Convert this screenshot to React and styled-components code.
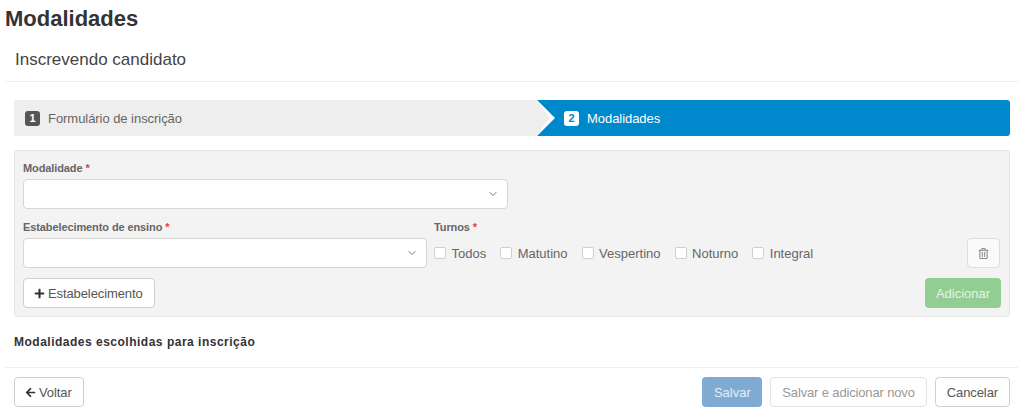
import React from "react";
import styled, { createGlobalStyle } from "styled-components";
import { FaPlus, FaArrowLeft, FaRegTrashAlt } from "react-icons/fa";
import { FiChevronDown } from "react-icons/fi";

const GlobalStyle = createGlobalStyle`
    html, body {
        margin: 0;
        padding: 0;
        background: #ffffff;
    }
    body {
        font-family: "Liberation Sans", Arial, sans-serif;
        color: #333333;
    }
    * {
        box-sizing: border-box;
    }
`;

const turnos = ["Todos", "Matutino", "Vespertino", "Noturno", "Integral"];

export default function App() {
    return (
        <>
            <GlobalStyle />
            <Page>
                <PageTitle>Modalidades</PageTitle>
                <SubHeader>Inscrevendo candidato</SubHeader>
                <Content>
                    <Steps>
                        <StepDone>
                            <StepNumber>1</StepNumber>
                            Formulário de inscrição
                        </StepDone>
                        <StepActive>
                            <StepNumber $active>2</StepNumber>
                            Modalidades
                        </StepActive>
                    </Steps>

                    <Panel>
                        <Label>
                            Modalidade <Req>*</Req>
                        </Label>
                        <Select $width="485px">
                            <FiChevronDown />
                        </Select>

                        <ShiftGrid>
                            <Label>
                                Estabelecimento de ensino <Req>*</Req>
                            </Label>
                            <Label>
                                Turnos <Req>*</Req>
                            </Label>
                            <Select>
                                <FiChevronDown />
                            </Select>
                            <CheckRow>
                                {turnos.map((t) => (
                                    <CheckItem key={t}>
                                        <CheckBox />
                                        {t}
                                    </CheckItem>
                                ))}
                                <TrashButton>
                                    <FaRegTrashAlt />
                                </TrashButton>
                            </CheckRow>
                        </ShiftGrid>

                        <PanelActions>
                            <Button>
                                <FaPlus className="dark" />
                                Estabelecimento
                            </Button>
                            <AddButton>Adicionar</AddButton>
                        </PanelActions>
                    </Panel>

                    <ChosenTitle>Modalidades escolhidas para inscrição</ChosenTitle>
                </Content>

                <Footer>
                    <Button>
                        <FaArrowLeft className="dark" />
                        Voltar
                    </Button>
                    <FooterRight>
                        <SaveButton>Salvar</SaveButton>
                        <Button $disabled>Salvar e adicionar novo</Button>
                        <Button>Cancelar</Button>
                    </FooterRight>
                </Footer>
            </Page>
        </>
    );
}

const Page = styled.div`
    width: 1024px;
    height: 419px;
    overflow: hidden;
    padding: 8px 6px 0 5px;
`;

const PageTitle = styled.h1`
    margin: 0;
    font-size: 22px;
    line-height: 22px;
    font-weight: 700;
    color: #333333;
`;

const SubHeader = styled.div`
    margin-top: 20px;
    padding: 0 8px 11px 10px;
    font-size: 17px;
    line-height: 20px;
    color: #444444;
    border-bottom: 1px solid #eeeeee;
`;

const Content = styled.div`
    padding: 18px 8px 0 9px;
`;

const Steps = styled.div`
    display: flex;
    height: 36px;
    font-size: 13px;
    letter-spacing: -0.05px;
`;

const StepDone = styled.div`
    width: 536px;
    margin-right: -13px;
    display: flex;
    align-items: center;
    padding-left: 11px;
    color: #666666;
    background: #eeeeee;
    clip-path: polygon(0 0, 522px 0, 100% 50%, 522px 100%, 0 100%);
`;

const StepActive = styled.div`
    flex: 1;
    display: flex;
    align-items: center;
    padding-left: 27px;
    color: #ffffff;
    background: #0088cc;
    border-radius: 0 3px 3px 0;
    clip-path: polygon(0 0, 100% 0, 100% 100%, 0 100%, 18px 50%);
`;

const StepNumber = styled.span`
    width: 15px;
    height: 15px;
    margin-right: 8px;
    border-radius: 3px;
    display: flex;
    align-items: center;
    justify-content: center;
    font-size: 11px;
    font-weight: 700;
    color: ${(p) => (p.$active ? "#0088cc" : "#ffffff")};
    background: ${(p) => (p.$active ? "#ffffff" : "#555555")};
`;

const Panel = styled.div`
    margin-top: 14px;
    height: 167px;
    padding: 10px 8px 8px;
    background: #f3f3f3;
    border: 1px solid #e6e6e6;
    border-radius: 3px;
`;

const Label = styled.div`
    height: 14px;
    margin-bottom: 4px;
    font-size: 11px;
    line-height: 14px;
    font-weight: 700;
    letter-spacing: -0.1px;
    color: #666666;
`;

const Req = styled.span`
    color: #e04040;
`;

const Select = styled.div`
    width: ${(p) => p.$width || "100%"};
    height: 30px;
    display: flex;
    align-items: center;
    justify-content: flex-end;
    padding-right: 8px;
    background: #ffffff;
    border: 1px solid #d6d6d6;
    border-radius: 4px;
    color: #777777;
    font-size: 12px;
`;

const ShiftGrid = styled.div`
    margin-top: 11px;
    display: grid;
    grid-template-columns: 404px 1fr;
    column-gap: 7px;
`;

const CheckRow = styled.div`
    display: flex;
    align-items: center;
    gap: 14px;
`;

const CheckItem = styled.div`
    display: flex;
    align-items: center;
    gap: 5.5px;
    font-size: 13px;
    color: #666666;
`;

const CheckBox = styled.span`
    width: 12px;
    height: 12px;
    background: #ffffff;
    border: 1px solid #cfcfcf;
    border-radius: 2px;
`;

const TrashButton = styled.div`
    width: 33px;
    height: 30px;
    margin-left: auto;
    margin-right: 1px;
    display: flex;
    align-items: center;
    justify-content: center;
    font-size: 11px;
    color: #888888;
    background: #fafafa;
    border: 1px solid #dddddd;
    border-radius: 4px;
`;

const PanelActions = styled.div`
    margin-top: 10px;
    display: flex;
    justify-content: space-between;
`;

const Button = styled.div`
    height: 30px;
    padding: 0 11px;
    display: flex;
    align-items: center;
    gap: 3px;
    font-size: 13px;
    letter-spacing: ${(p) => (p.$disabled ? "-0.15px" : "-0.1px")};
    color: ${(p) => (p.$disabled ? "#999999" : "#555555")};
    background: #ffffff;
    border: 1px solid ${(p) => (p.$disabled ? "#e2e2e2" : "#cfcfcf")};
    border-radius: 4px;

    .dark {
        margin-left: -1px;
        font-size: 11px;
        color: #333333;
    }
`;

const AddButton = styled.div`
    width: 76px;
    height: 30px;
    display: flex;
    align-items: center;
    justify-content: center;
    font-size: 13px;
    color: #e6f4e6;
    background: #92cd92;
    border-radius: 4px;
`;

const ChosenTitle = styled.div`
    margin-top: 17px;
    height: 33px;
    font-size: 12px;
    line-height: 16px;
    font-weight: 700;
    letter-spacing: 0.5px;
    color: #333333;
`;

const Footer = styled.div`
    display: flex;
    justify-content: space-between;
    padding: 9px 8px 0 9px;
    border-top: 1px solid #eeeeee;
`;

const FooterRight = styled.div`
    display: flex;
    gap: 8px;
`;

const SaveButton = styled.div`
    width: 60px;
    height: 30px;
    display: flex;
    align-items: center;
    justify-content: center;
    font-size: 13px;
    color: #e4eef6;
    background: #7fabd2;
    border-radius: 4px;
`;
